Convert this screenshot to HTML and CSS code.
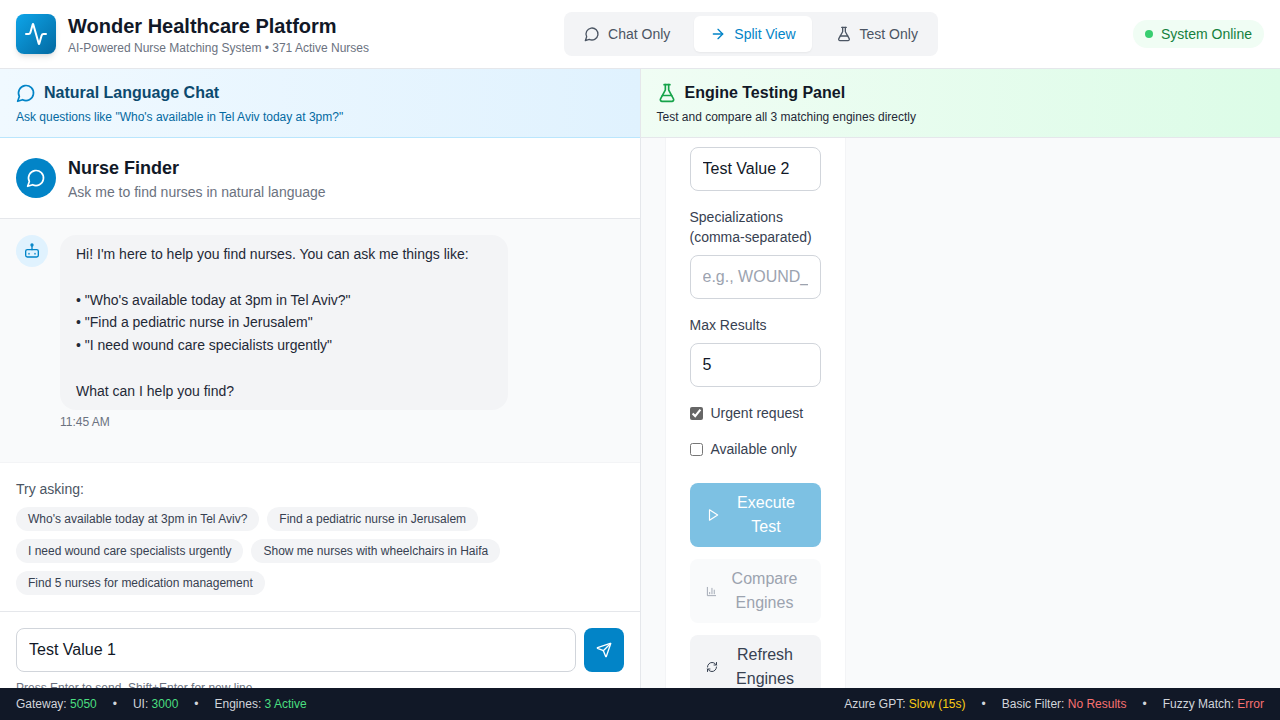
FILE: index.html
```html
<!DOCTYPE html>
<html lang="en">
<head>
    <meta charset="UTF-8">
    <meta name="viewport" content="width=device-width, initial-scale=1.0">
    <title>Wonder Healthcare Platform</title>
    <link rel="stylesheet" href="styles.css">
</head>
<body>
    <div class="app">
        <!-- top bar -->
        <header class="topbar">
            <div class="brand">
                <div class="brand-logo">
                    <svg class="icon" width="24" height="24" viewBox="0 0 24 24"><path d="M22 12h-2.48a2 2 0 0 0-1.93 1.46l-2.35 8.36a.25.25 0 0 1-.48 0L9.24 2.18a.25.25 0 0 0-.48 0l-2.35 8.36A2 2 0 0 1 4.49 12H2"/></svg>
                </div>
                <div>
                    <h1 class="brand-title">Wonder Healthcare Platform</h1>
                    <p class="brand-sub">AI-Powered Nurse Matching System • 371 Active Nurses</p>
                </div>
            </div>
            <nav class="view-tabs">
                <button class="view-tab">
                    <svg class="icon" width="16" height="16" viewBox="0 0 24 24"><path d="M7.9 20A9 9 0 1 0 4 16.1L2 22Z"/></svg>
                    Chat Only
                </button>
                <button class="view-tab active">
                    <svg class="icon" width="16" height="16" viewBox="0 0 24 24"><path d="M5 12h14"/><path d="m12 5 7 7-7 7"/></svg>
                    Split View
                </button>
                <button class="view-tab">
                    <svg class="icon" width="16" height="16" viewBox="0 0 24 24"><path d="M14 2v6a2 2 0 0 0 .245.96l5.51 10.08A2 2 0 0 1 18 22H6a2 2 0 0 1-1.755-2.96l5.51-10.08A2 2 0 0 0 10 8V2"/><path d="M6.453 15h11.094"/><path d="M8.5 2h7"/></svg>
                    Test Only
                </button>
            </nav>
            <div class="status-pill"><span class="status-dot"></span>System Online</div>
        </header>

        <main class="split">
            <!-- left side: chat -->
            <section class="chat-side">
                <div class="panel-head chat-head">
                    <h2 class="panel-title chat-title">
                        <svg class="icon" width="20" height="20" viewBox="0 0 24 24"><path d="M7.9 20A9 9 0 1 0 4 16.1L2 22Z"/></svg>
                        Natural Language Chat
                    </h2>
                    <p class="panel-sub chat-sub">Ask questions like "Who's available in Tel Aviv today at 3pm?"</p>
                </div>
                <div class="finder">
                    <div class="finder-icon">
                        <svg class="icon" width="20" height="20" viewBox="0 0 24 24"><path d="M7.9 20A9 9 0 1 0 4 16.1L2 22Z"/></svg>
                    </div>
                    <div>
                        <h3 class="finder-title">Nurse Finder</h3>
                        <p class="finder-sub">Ask me to find nurses in natural language</p>
                    </div>
                </div>
                <div class="messages">
                    <div class="avatar">
                        <svg class="icon" width="16" height="16" viewBox="0 0 24 24"><path d="M12 4.5V10"/><circle cx="12" cy="3" r="1.5"/><rect width="19" height="11" x="2.5" y="10" rx="2.5"/><path d="M7.5 15.5v1"/><path d="M16.5 15.5v1"/></svg>
                    </div>
                    <div>
                        <div class="bubble">Hi! I'm here to help you find nurses. You can ask me things like:

• "Who's available today at 3pm in Tel Aviv?"
• "Find a pediatric nurse in Jerusalem"
• "I need wound care specialists urgently"

What can I help you find?</div>
                        <div class="msg-time">11:45 AM</div>
                    </div>
                </div>
                <div class="suggestions">
                    <p class="suggestions-label">Try asking:</p>
                    <div class="chips">
                        <span class="chip">Who's available today at 3pm in Tel Aviv?</span>
                        <span class="chip">Find a pediatric nurse in Jerusalem</span>
                        <span class="chip">I need wound care specialists urgently</span>
                        <span class="chip">Show me nurses with wheelchairs in Haifa</span>
                        <span class="chip">Find 5 nurses for medication management</span>
                    </div>
                </div>
                <div class="composer">
                    <div class="composer-row">
                        <input class="composer-input" type="text" value="Test Value 1">
                        <button class="send-btn">
                            <svg class="icon" width="16" height="16" viewBox="0 0 24 24"><path d="M14.536 21.686a.5.5 0 0 0 .937-.024l6.5-19a.496.496 0 0 0-.635-.635l-19 6.5a.5.5 0 0 0-.024.937l7.93 3.18a2 2 0 0 1 1.112 1.11z"/><path d="m21.854 2.147-10.94 10.939"/></svg>
                        </button>
                    </div>
                    <p class="composer-hint">Press Enter to send, Shift+Enter for new line</p>
                </div>
            </section>

            <!-- right side: engine tests -->
            <section class="test-side">
                <div class="panel-head test-head">
                    <h2 class="panel-title test-title">
                        <svg class="icon flask" width="20" height="20" viewBox="0 0 24 24"><path d="M14 2v6a2 2 0 0 0 .245.96l5.51 10.08A2 2 0 0 1 18 22H6a2 2 0 0 1-1.755-2.96l5.51-10.08A2 2 0 0 0 10 8V2"/><path d="M6.453 15h11.094"/><path d="M8.5 2h7"/></svg>
                        Engine Testing Panel
                    </h2>
                    <p class="panel-sub test-sub">Test and compare all 3 matching engines directly</p>
                </div>
                <div class="test-body">
                    <form class="test-card">
                        <input class="field-input" type="text" value="Test Value 2">
                        <label class="field-label">Specializations (comma-separated)</label>
                        <input class="field-input" type="text" placeholder="e.g., WOUND_CARE">
                        <label class="field-label">Max Results</label>
                        <input class="field-input" type="text" value="5">
                        <label class="check-row"><input type="checkbox" checked> Urgent request</label>
                        <label class="check-row"><input type="checkbox"> Available only</label>
                        <div class="actions">
                            <button type="button" class="action-btn execute">
                                <svg class="icon" width="14" height="14" viewBox="0 0 24 24"><polygon points="6 3 20 12 6 21 6 3"/></svg>
                                <span class="action-label">Execute Test</span>
                            </button>
                            <button type="button" class="action-btn compare">
                                <svg class="icon" width="11" height="11" viewBox="0 0 24 24"><path d="M3 3v18h18"/><path d="M18 17V9"/><path d="M13 17V5"/><path d="M8 17v-3"/></svg>
                                <span class="action-label">Compare Engines</span>
                            </button>
                            <button type="button" class="action-btn refresh">
                                <svg class="icon" width="12" height="12" viewBox="0 0 24 24"><path d="M3 12a9 9 0 0 1 9-9 9.75 9.75 0 0 1 6.74 2.74L21 8"/><path d="M21 3v5h-5"/><path d="M21 12a9 9 0 0 1-9 9 9.75 9.75 0 0 1-6.74-2.74L3 16"/><path d="M8 16H3v5"/></svg>
                                <span class="action-label">Refresh Engines</span>
                            </button>
                        </div>
                    </form>
                </div>
            </section>
        </main>

        <!-- bottom status bar -->
        <footer class="statusbar">
            <div class="status-group">
                <span>Gateway: <b class="ok">5050</b></span><span class="sep">•</span>
                <span>UI: <b class="ok">3000</b></span><span class="sep">•</span>
                <span>Engines: <b class="ok">3 Active</b></span>
            </div>
            <div class="status-group">
                <span>Azure GPT: <b class="warn">Slow (15s)</b></span><span class="sep">•</span>
                <span>Basic Filter: <b class="bad">No Results</b></span><span class="sep">•</span>
                <span>Fuzzy Match: <b class="bad">Error</b></span>
            </div>
        </footer>
    </div>
</body>
</html>
```

FILE: styles.css
```css
* {
    box-sizing: border-box;
}
html, body {
    margin: 0;
    height: 100%;
    overflow: hidden;
}
body {
    font-family: "Liberation Sans", Arial, sans-serif;
    color: #111827;
    background: #fff;
}
h1, h2, h3, p {
    margin: 0;
}
.icon {
    fill: none;
    stroke: currentColor;
    stroke-width: 2;
    stroke-linecap: round;
    stroke-linejoin: round;
    flex-shrink: 0;
}
.app {
    display: flex;
    flex-direction: column;
    height: 720px;
}

/* top bar */
.topbar {
    display: flex;
    align-items: center;
    justify-content: space-between;
    height: 69px;
    padding: 0 16px;
    background: #fff;
    border-bottom: 1px solid #e5e7eb;
    flex-shrink: 0;
}
.brand {
    display: flex;
    align-items: center;
    gap: 12px;
    width: 353px;
}
.brand-logo {
    width: 40px;
    height: 40px;
    border-radius: 8px;
    background: linear-gradient(135deg, #0ea5e9, #0369a1);
    color: #fff;
    display: flex;
    align-items: center;
    justify-content: center;
    box-shadow: 0 4px 6px -1px rgba(0,0,0,0.1), 0 2px 4px -2px rgba(0,0,0,0.1);
}
.brand-title {
    font-size: 20px;
    line-height: 28px;
    font-weight: 700;
}
.brand-sub {
    font-size: 12px;
    line-height: 16px;
    color: #6b7280;
}
.view-tabs {
    display: flex;
    gap: 8px;
    padding: 4px;
    background: #f3f4f6;
    border-radius: 8px;
}
.view-tab {
    display: flex;
    align-items: center;
    gap: 8px;
    height: 36px;
    padding: 0 16px;
    border: 0;
    border-radius: 6px;
    background: none;
    font-family: inherit;
    font-size: 14px;
    color: #4b5563;
}
.view-tab.active {
    background: #fff;
    color: #0284c7;
    box-shadow: 0 1px 2px rgba(0,0,0,0.05);
}
.status-pill {
    display: flex;
    align-items: center;
    gap: 8px;
    height: 28px;
    padding: 0 12px;
    border-radius: 14px;
    background: #f0fdf4;
    color: #15803d;
    font-size: 14px;
}
.status-dot {
    width: 8px;
    height: 8px;
    border-radius: 50%;
    background: #38ce70;
}

/* split view */
.split {
    display: flex;
    flex: 1;
    min-height: 0;
    overflow: hidden;
}
.chat-side {
    width: 640.5px;
    border-right: 1px solid #e5e7eb;
    display: flex;
    flex-direction: column;
    flex-shrink: 0;
}
.test-side {
    flex: 1;
    display: flex;
    flex-direction: column;
    background: #f9fafb;
}
.panel-head {
    height: 69px;
    padding: 12px 16px 0;
    flex-shrink: 0;
}
.chat-head {
    background: linear-gradient(90deg, #f0f9ff, #e0f2fe);
    border-bottom: 1px solid #bae6fd;
}
.test-head {
    background: linear-gradient(90deg, #f0fdf4, #dcfce7);
    border-bottom: 1px solid #e5e7eb;
}
.panel-title {
    display: flex;
    align-items: center;
    gap: 8px;
    font-size: 16px;
    line-height: 24px;
    font-weight: 700;
}
.chat-title {
    color: #0c4a6e;
}
.chat-title .icon {
    color: #0284c7;
}
.test-title {
    color: #111827;
}
.flask {
    color: #16a34a;
}
.panel-sub {
    font-size: 12px;
    line-height: 16px;
    margin-top: 4px;
}
.chat-sub {
    color: #0369a1;
}
.test-sub {
    color: #1f2937;
}

/* chat */
.finder {
    display: flex;
    align-items: center;
    gap: 12px;
    height: 81px;
    padding: 0 16px;
    border-bottom: 1px solid #e5e7eb;
    flex-shrink: 0;
}
.finder-icon {
    width: 40px;
    height: 40px;
    border-radius: 50%;
    background: #0284c7;
    color: #fff;
    display: flex;
    align-items: center;
    justify-content: center;
}
.finder-title {
    font-size: 18px;
    line-height: 28px;
    font-weight: 700;
}
.finder-sub {
    font-size: 14px;
    line-height: 20px;
    color: #6b7280;
}
.messages {
    display: flex;
    gap: 12px;
    height: 244px;
    padding: 16px;
    background: #f9fafb;
    border-bottom: 1px solid #f3f4f6;
    flex-shrink: 0;
}
.avatar {
    width: 32px;
    height: 32px;
    border-radius: 50%;
    background: #e0f2fe;
    color: #0284c7;
    display: flex;
    align-items: center;
    justify-content: center;
}
.bubble {
    width: 448px;
    padding: 8px 16px;
    border-radius: 16px;
    background: #f3f4f6;
    color: #1f2937;
    font-size: 14px;
    line-height: 22.75px;
    white-space: pre-line;
}
.msg-time {
    margin-top: 4px;
    font-size: 12px;
    line-height: 16px;
    color: #6b7280;
}
.suggestions {
    height: 149px;
    padding: 16px 16px 0;
    border-bottom: 1px solid #e5e7eb;
    flex-shrink: 0;
}
.suggestions-label {
    font-size: 14px;
    line-height: 20px;
    color: #4b5563;
    margin-bottom: 8px;
}
.chips {
    display: flex;
    flex-wrap: wrap;
    gap: 8px;
}
.chip {
    height: 24px;
    padding: 0 12px;
    border-radius: 12px;
    background: #f3f4f6;
    color: #374151;
    font-size: 12px;
    line-height: 24px;
}
.composer {
    padding: 16px 16px 0;
    background: #fff;
    flex-shrink: 0;
}
.composer-row {
    display: flex;
    gap: 8px;
}
.composer-input {
    flex: 1;
    height: 44px;
    padding: 0 12px;
    border: 1px solid #d1d5db;
    border-radius: 8px;
    font-family: inherit;
    font-size: 16px;
    color: #111827;
}
.send-btn {
    width: 40px;
    height: 44px;
    border: 0;
    border-radius: 8px;
    background: #0284c7;
    color: #fff;
    display: flex;
    align-items: center;
    justify-content: center;
}
.composer-hint {
    margin-top: 8px;
    font-size: 12px;
    line-height: 16px;
    color: #6b7280;
}

/* engine test form */
.test-body {
    flex: 1;
    padding: 0 24px;
    overflow: hidden;
}
.test-card {
    width: 181px;
    padding: 9px 24px 0;
    background: #fff;
    border: 1px solid #f3f4f6;
    border-top: 0;
    display: flex;
    flex-direction: column;
    min-height: 100%;
}
.field-input {
    width: 100%;
    height: 44px;
    padding: 0 12px;
    border: 1px solid #d1d5db;
    border-radius: 8px;
    font-family: inherit;
    font-size: 16px;
    color: #111827;
    flex-shrink: 0;
}
.field-input::placeholder {
    color: #9ca3af;
}
.field-label {
    margin: 16px 0 8px;
    font-size: 14px;
    line-height: 20px;
    color: #374151;
}
.check-row {
    display: flex;
    align-items: center;
    gap: 8px;
    margin-top: 16px;
    font-size: 14px;
    line-height: 20px;
    color: #374151;
}
.check-row input {
    width: 13px;
    height: 13px;
    margin: 0;
    accent-color: #666;
}
.actions {
    display: flex;
    flex-direction: column;
    gap: 12px;
    margin-top: 24px;
}
.action-btn {
    display: flex;
    align-items: center;
    justify-content: center;
    gap: 8px;
    width: 100%;
    min-height: 64px;
    padding: 8px 16px;
    border: 0;
    border-radius: 8px;
    font-family: inherit;
    font-size: 16px;
    line-height: 24px;
}
.action-label {
    flex: 1;
    min-width: 0;
}
.execute {
    background: #7dc1e3;
    color: #fff;
}
.compare {
    background: #f9fafb;
    color: #9ca3af;
}
.refresh {
    background: #f3f4f6;
    color: #374151;
}

/* bottom bar */
.statusbar {
    display: flex;
    align-items: center;
    justify-content: space-between;
    height: 32px;
    padding: 0 16px;
    background: #111827;
    color: #d1d5db;
    font-size: 12px;
    flex-shrink: 0;
}
.status-group {
    display: flex;
    gap: 16px;
}
.status-group b {
    font-weight: 400;
}
.sep {
    color: #d1d5db;
}
.ok {
    color: #4ade80;
}
.warn {
    color: #facc15;
}
.bad {
    color: #f87171;
}
```
